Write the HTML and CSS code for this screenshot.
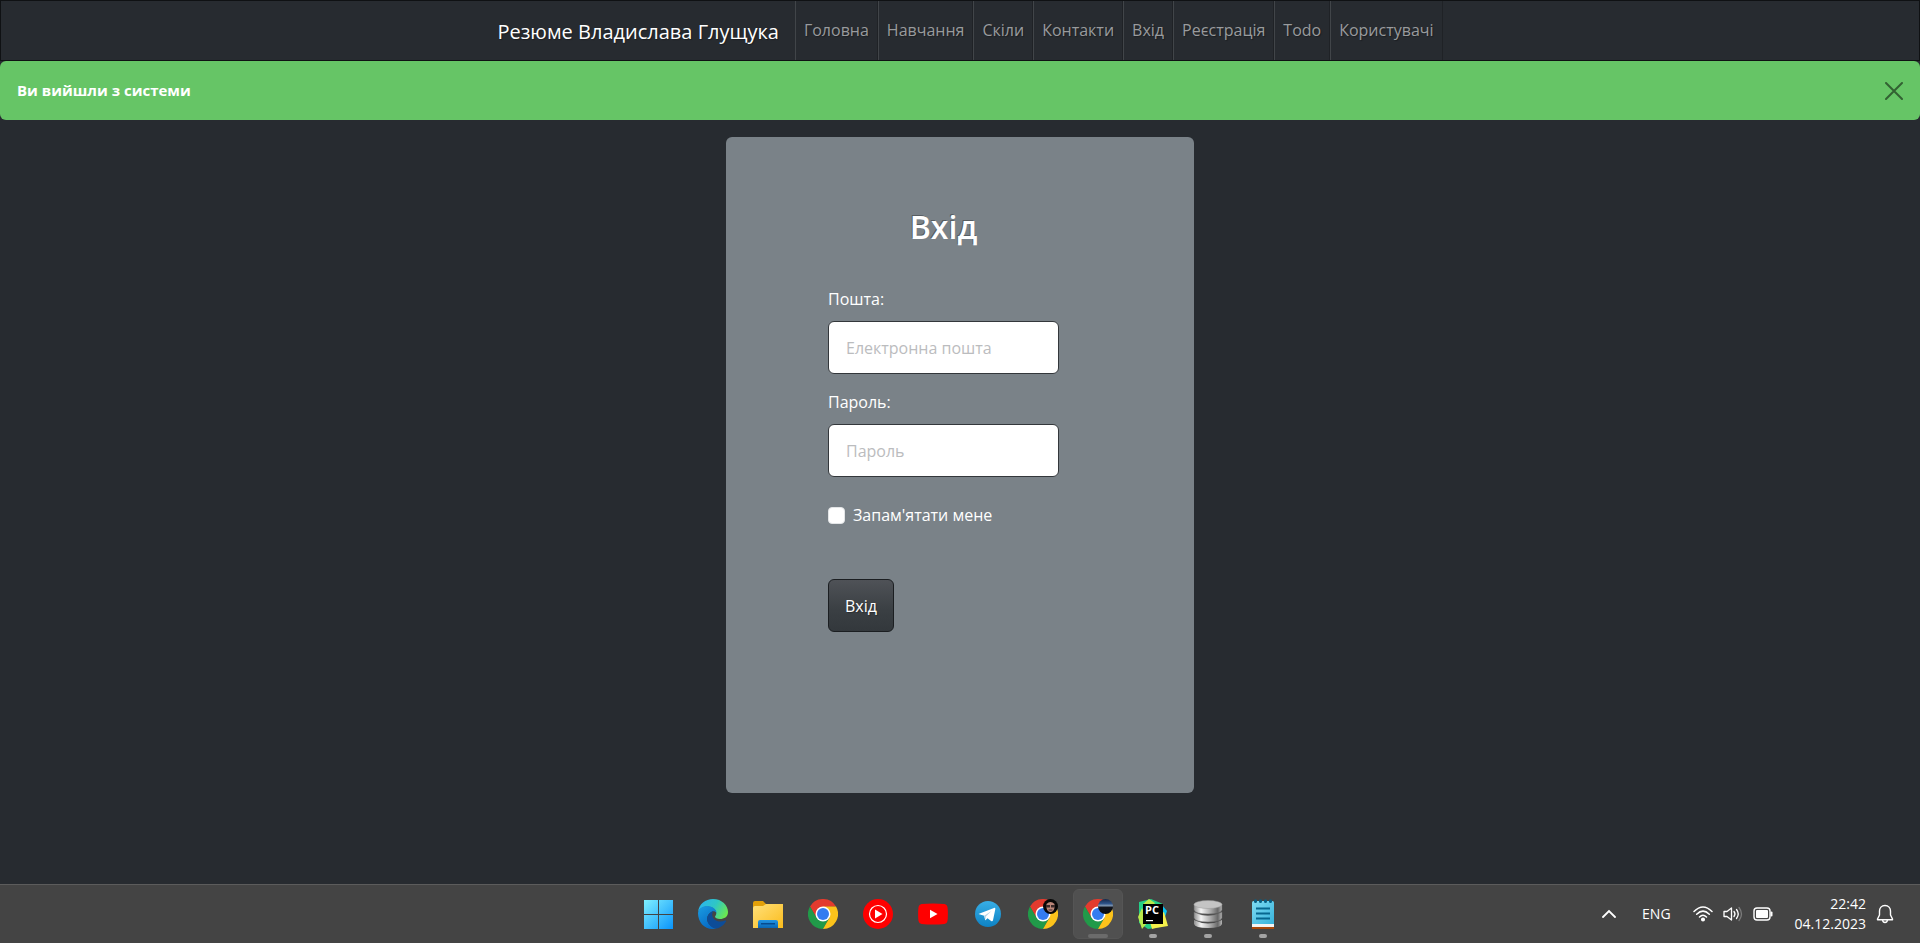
FILE: index.html
```html
<!DOCTYPE html>
<html lang="uk">
<head>
<meta charset="utf-8">
<title>Вхід</title>
<meta name="viewport" content="width=device-width, initial-scale=1">
<link rel="stylesheet" href="styles.css">
</head>
<body>
<svg class="defs" aria-hidden="true">
  <defs>
    <linearGradient id="win" x1="0" y1="0" x2="1" y2="1"><stop offset="0" stop-color="#7ff0ff"/><stop offset="1" stop-color="#0a94fb"/></linearGradient>
    <linearGradient id="edgeTop" x1="0" y1="0.3" x2="1" y2="0.7"><stop offset="0" stop-color="#2bb4ee"/><stop offset="0.5" stop-color="#2fc7c4"/><stop offset="1" stop-color="#6eea4a"/></linearGradient>
    <linearGradient id="edgeSide" x1="0" y1="0" x2="0.6" y2="1"><stop offset="0" stop-color="#1b9de2"/><stop offset="1" stop-color="#0669c4"/></linearGradient>
    <linearGradient id="folder" x1="0" y1="0" x2="1" y2="1"><stop offset="0" stop-color="#ffe07a"/><stop offset="1" stop-color="#fbbc1c"/></linearGradient>
    <linearGradient id="tray" x1="0" y1="0" x2="0" y2="1"><stop offset="0" stop-color="#2295e4"/><stop offset="1" stop-color="#0b66b4"/></linearGradient>
    <linearGradient id="tg" x1="0" y1="0" x2="0" y2="1"><stop offset="0" stop-color="#38aee6"/><stop offset="1" stop-color="#0d82c4"/></linearGradient>
    <linearGradient id="steel" x1="0" y1="0" x2="1" y2="0"><stop offset="0" stop-color="#8f8f8f"/><stop offset="0.25" stop-color="#f4f4f4"/><stop offset="0.6" stop-color="#a8a8a8"/><stop offset="0.85" stop-color="#686868"/><stop offset="1" stop-color="#b5b5b5"/></linearGradient>
    <linearGradient id="note" x1="0" y1="0" x2="1" y2="1"><stop offset="0" stop-color="#7fdcf3"/><stop offset="1" stop-color="#37b3dc"/></linearGradient>
    <linearGradient id="view" x1="0" y1="0" x2="0" y2="1"><stop offset="0" stop-color="#16284a"/><stop offset="0.3" stop-color="#2d5288"/><stop offset="0.46" stop-color="#8299b4"/><stop offset="0.54" stop-color="#12151e"/><stop offset="1" stop-color="#080b12"/></linearGradient>
    <symbol id="chrome" viewBox="0 0 30 30">
      <path fill="#e33b2e" d="M2 7.500A15 15 0 0 1 28 7.500L15 8 8.500 18.800z"/>
      <path fill="#219a49" d="M2 7.500L8.500 18.700 15 22.500 21.500 18.700 15 30A15 15 0 0 1 2 7.500z"/>
      <path fill="#fcc31b" d="M28 7.500A15 15 0 0 1 15 30L21.500 18.700 21 11 15 7.500z"/>
      <circle cx="15" cy="15" r="7.500" fill="#fff"/><circle cx="15" cy="15" r="6" fill="#347cf0"/>
    </symbol>
  </defs>
</svg>

<nav class="navbar">
  <a class="brand" href="#">Резюме Владислава Глущука</a>
  <ul class="menu">
    <li><a href="#">Головна</a></li>
    <li><a href="#">Навчання</a></li>
    <li><a href="#">Скіли</a></li>
    <li><a href="#">Контакти</a></li>
    <li><a href="#">Вхід</a></li>
    <li><a href="#">Реєстрація</a></li>
    <li><a href="#">Todo</a></li>
    <li><a href="#">Користувачі</a></li>
  </ul>
</nav>

<div class="alert" role="alert">
  <strong>Ви вийшли з системи</strong>
  <button class="close" type="button" aria-label="Закрити">
    <svg width="18" height="18" viewBox="0 0 18 18"><path d="M1 1l16 16M17 1L1 17" fill="none" stroke="#000" stroke-width="2" stroke-linecap="round"/></svg>
  </button>
</div>

<main class="page">
  <form class="card">
    <h1>Вхід</h1>
    <label for="email">Пошта:</label>
    <input class="field" id="email" type="email" placeholder="Електронна пошта">
    <label for="password">Пароль:</label>
    <input class="field" id="password" type="password" placeholder="Пароль">
    <div class="check">
      <input id="remember" type="checkbox">
      <label for="remember">Запам'ятати мене</label>
    </div>
    <button class="submit" type="button">Вхід</button>
  </form>
</main>

<footer class="taskbar">
  <div class="apps">
    <button class="app" type="button" aria-label="Start"><svg viewBox="0 0 30 30"><path fill="url(#win)" d="M1 1h14v14H1zM16 1h14v14H16zM1 16h14v14H1zM16 16h14v14H16z"/></svg></button>
    <button class="app" type="button" aria-label="Edge"><svg viewBox="0 0 30 30">
      <path fill="url(#edgeTop)" d="M0 13C1 5 7.500 0 15 0c9 0 15 6.500 15 13 0 5-4 7-8 7-3 0-5-1-5-2.200 0-.8 1.300-1.400 1.300-3.500C18.300 10 13 7 8.500 7.500 4 8 1 10.500 0 13z"/>
      <path fill="url(#edgeSide)" d="M0 14c.5-4 4-7 9-7 5 0 9.500 3 9.500 7-1-1.700-3-2.200-4.700-1.300C9 15 7.500 20.500 11 25c2 2.700 4.700 4 7.500 4.500C8 32 0 24.500 0 14z"/>
      <path fill="#0d4c97" d="M14 12.500c-5 3-6.500 8-3 12.700 3.500 4.500 8 5 10.500 3.300 3-1.500 5-3.500 6.500-6 .5-.9-.2-1.300-1-.9-6 2.800-12.500-.6-12.800-5.600 0-1.500.4-2.700 1.300-3.700z"/>
    </svg></button>
    <button class="app" type="button" aria-label="Explorer"><svg viewBox="0 0 30 30">
      <path fill="#e3a008" d="M0 4q0-2 2-2h8l3 3h15q2 0 2 2v5H0z"/>
      <path fill="url(#folder)" d="M0 9q0-2 2-2h8l3-2h17v24H0z"/>
      <path fill="url(#tray)" d="M5 29v-6q0-2 2-2h16q2 0 2 2v6z"/><path fill="#064b8f" d="M8 24h14v1.500H8z"/>
    </svg></button>
    <button class="app" type="button" aria-label="Chrome"><svg viewBox="0 0 30 30"><use href="#chrome"/></svg></button>
    <button class="app" type="button" aria-label="YouTube Music"><svg viewBox="0 0 30 30"><circle cx="15" cy="15" r="15" fill="#f00"/><circle cx="15" cy="15" r="8.500" fill="none" stroke="#fff" stroke-width="1.200"/><path fill="#fff" d="M12 10.500v9l7.500-4.500z"/></svg></button>
    <button class="app" type="button" aria-label="YouTube"><svg viewBox="0 0 30 30"><path fill="#f00" d="M3.500 5Q15 4 26.500 5 29 5.300 29.500 8q.8 7 0 14-.5 2.700-3 3-11.500 1-23 0Q1 24.700.5 22q-.8-7 0-14Q1 5.300 3.500 5z"/><path fill="#fff" d="M12 10.700v8.600l7.500-4.300z"/></svg></button>
    <button class="app" type="button" aria-label="Telegram"><svg viewBox="0 0 30 30"><circle cx="15" cy="15" r="13" fill="url(#tg)"/><path fill="#fff" d="M6 14.700L21 8.900q1.500-.4 1.300 1.300L20 21.300q-.5 1.500-1.900.6l-3.600-2.700-1.800 1.800q-.6.600-.7-.4l-.8-3.900-5-1.500q-1.200-.3-.2-.5z"/><path fill="#b7d4e5" d="M11.200 16.700l7.300-4.700-5.700 5.500-.3 3.500z"/></svg></button>
    <button class="app" type="button" aria-label="Chrome, profile 1"><svg viewBox="0 0 30 30"><use href="#chrome"/><circle cx="22.500" cy="7.500" r="7.500" fill="#070707"/><path fill="#b98578" d="M18.500 5q4-4 8 0v4q-1 4-4 4t-4-4z"/><path fill="#3a2a2a" d="M18 6h4v2.500h-4zM23 6h4v2.500h-4zM20.500 10.500h4v1h-4z"/></svg></button>
    <button class="app active" type="button" aria-label="Chrome, profile 2"><svg viewBox="0 0 30 30"><use href="#chrome"/><circle cx="22.500" cy="7.500" r="7.500" fill="url(#view)"/></svg></button>
    <button class="app open" type="button" aria-label="PyCharm"><svg viewBox="0 0 30 30">
      <path fill="#24cf87" d="M1 3L13 0l12 5-3 23-12 2-9-6z"/><path fill="#b9e94b" d="M0 18l4-9 6 14-6 7zM5 5l6-5 6 4-5 6z"/><path fill="#08c3f2" d="M24 6l5 6-3 9-4-3z"/><path fill="#f4f04b" d="M12 23l14-10 4 14-12 2-4 1z"/>
      <path fill="#000" d="M5 5h20v20H5z"/><path fill="#fff" d="M8 21h7v1.200H8z"/><text class="pc" x="7" y="15">PC</text>
    </svg></button>
    <button class="app open" type="button" aria-label="Database"><svg viewBox="0 0 30 30">
      <path fill="url(#steel)" d="M1 21q14 7 28 0v4q-1 4-14 4T1 25z"/>
      <path fill="url(#steel)" stroke="#666" stroke-width=".5" d="M1 13q14 7 28 0v6q-1 4-14 4T1 19z"/>
      <path fill="url(#steel)" stroke="#666" stroke-width=".5" d="M1 5h28v6q-1 4-14 4T1 11z"/>
      <ellipse cx="15" cy="5.500" rx="14" ry="4" fill="#c4c4c4" stroke="#999" stroke-width=".5"/>
    </svg></button>
    <button class="app open" type="button" aria-label="Notepad"><svg viewBox="0 0 30 30">
      <path fill="#a8480a" d="M4 26h22v4H4z"/><path fill="#f4f4f4" d="M4 25h22v3H4z"/><path fill="url(#note)" d="M4 3.500Q4 2 5.500 2h19Q26 2 26 3.500V25H4z"/>
      <path stroke="#07678f" stroke-width="1.800" d="M8 9.500h14M8 14.500h14M8 19.500h14"/><path stroke="#075f85" stroke-width="3" stroke-linecap="round" d="M7.500 1.700v.8M12.500 1.700v.8M17.500 1.700v.8M22.500 1.700v.8"/>
    </svg></button>
  </div>
  <div class="tray">
    <svg class="up" width="14" height="10" viewBox="0 0 14 10"><path d="M1 8l6-6 6 6" fill="none" stroke="#fff" stroke-width="1.800" stroke-linecap="round"/></svg>
    <span class="lang">ENG</span>
    <svg class="wifi" width="20" height="20" viewBox="0 0 20 20" fill="none" stroke="#fff" stroke-width="1.500" stroke-linecap="round"><path d="M1 7.500q9-9 18 0M3.700 10.300q6.300-6.300 12.600 0M6.500 13q3.500-3.500 7 0"/><circle cx="10" cy="15.500" r="1.300" fill="#fff"/></svg>
    <svg class="sound" width="20" height="20" viewBox="0 0 20 20" fill="none" stroke="#fff" stroke-width="1.300" stroke-linecap="round" stroke-linejoin="round"><path d="M1 7.500h3L8.500 4v12L4 12.500H1zM11 7.500q2 2.500 0 5M13.500 5.500q3.500 4.500 0 9"/><path stroke="#7b7b7b" d="M16 3.500q5 6.500 0 13"/></svg>
    <svg class="battery" width="20" height="20" viewBox="0 0 20 20"><rect x="1" y="4" width="16" height="12" rx="3" fill="none" stroke="#fff" stroke-width="1.400"/><rect x="3" y="6" width="12" height="8" rx="1" fill="#fff"/><path d="M18.500 8.500v3" stroke="#fff" stroke-width="2" stroke-linecap="round"/></svg>
    <time class="clock" datetime="2023-12-04T22:42"><span>22:42</span><span>04.12.2023</span></time>
    <svg class="bell" width="18" height="20" viewBox="0 0 18 20" fill="none" stroke="#fff" stroke-width="1.400" stroke-linejoin="round"><path d="M9 1.500c-3.500 0-5.500 2.500-5.500 5.500v4L1.500 15v.8h15V15l-2-4V7c0-3-2-5.500-5.500-5.500z"/><path d="M6.500 16q.5 2.500 2.500 2.500t2.500-2.500"/></svg>
  </div>
</footer>
</body>
</html>
```
FILE: styles.css
```css
*, *::before, *::after { box-sizing: border-box; }

body {
  margin: 0;
  min-height: 100vh;
  display: flex;
  flex-direction: column;
  background: #272b30;
  color: #fff;
  font-family: "Segoe UI", "Open Sans", sans-serif;
  font-size: 16px;
  line-height: 24px;
}

button, input { font: inherit; }

.defs { position: absolute; width: 0; height: 0; }

/* Top navigation */
.navbar {
  display: flex;
  justify-content: center;
  padding-left: 20px;
  border: 1px solid #0f1113;
  text-shadow: 1px 1px 1px rgba(0, 0, 0, 0.3);
}

.brand {
  margin-right: 16px;
  padding: 16px 0 13px;
  color: #fff;
  font-size: 20px;
  line-height: 30px;
  text-decoration: none;
}

.menu {
  display: flex;
  margin: 0;
  padding: 0;
  list-style: none;
}

.menu a {
  display: block;
  height: 100%;
  padding: 17px 8px 18px;
  border-left: 1px solid rgba(255, 255, 255, 0.12);
  border-right: 1px solid rgba(0, 0, 0, 0.2);
  color: #999b9d;
  text-decoration: none;
}

/* Flash message */
.alert {
  display: flex;
  align-items: center;
  justify-content: space-between;
  padding: 17px;
  border-radius: 6px;
  background: #66c566;
  font-size: 15px;
  line-height: 25px;
}

.close {
  display: flex;
  padding: 0;
  border: 0;
  background: none;
  opacity: 0.5;
}

/* Login card */
.page {
  flex: 1;
  padding: 17px 16px;
}

.card {
  display: flex;
  flex-direction: column;
  max-width: 468px;
  min-height: 656px;
  margin: 0 auto;
  padding: 70px 135px 70px 102px;
  border-radius: 6px;
  background: #7a8288;
}

.card h1 {
  margin: 0 0 40px;
  font-size: 32px;
  font-weight: 600;
  line-height: 40px;
  text-align: center;
  text-shadow: -1px -1px 0 rgba(0, 0, 0, 0.3);
}

.card > label { margin-bottom: 10px; }

.field {
  width: 100%;
  height: 53px;
  margin-bottom: 16px;
  padding: 0 17px;
  border: 1px solid #33373b;
  border-radius: 6px;
  background: #fff;
  color: #272b30;
}

.field::placeholder { color: #bbbcbe; opacity: 1; }

.check {
  display: flex;
  align-items: center;
  gap: 8px;
  margin: 10px 0 52px;
}

.check input {
  appearance: none;
  width: 17px;
  height: 17px;
  margin: 0;
  border: 1px solid #e3e5e7;
  border-radius: 4px;
  background: #fff;
}

.submit {
  align-self: flex-start;
  height: 53px;
  padding: 0 16px;
  border: 1px solid #1b1e21;
  border-radius: 6px;
  background: linear-gradient(#4f5257, #3a3f43 60%, #33383c);
  color: #fff;
  text-shadow: 1px 1px 1px rgba(0, 0, 0, 0.3);
}

/* Taskbar */
.taskbar {
  display: grid;
  grid-template-columns: 1fr auto 1fr;
  align-items: center;
  height: 59px;
  border-top: 1px solid #5c5c5c;
  background: #444;
}

.apps {
  grid-column: 2;
  display: flex;
  gap: 5px;
}

.app {
  position: relative;
  display: flex;
  align-items: center;
  justify-content: center;
  width: 50px;
  height: 50px;
  padding: 0;
  border: 1px solid transparent;
  border-radius: 6px;
  background: none;
}

.app svg { width: 30px; height: 30px; }

.app.active { border-color: #555; background: #505050; }

.app.open::after,
.app.active::after {
  content: "";
  position: absolute;
  bottom: 0;
  left: 50%;
  width: 8px;
  height: 4px;
  border-radius: 2px;
  background: #a3a3a3;
  transform: translateX(-50%);
}

.app.active::after { width: 20px; background: #6b6b6b; }

.pc {
  fill: #fff;
  font-family: "Open Sans", sans-serif;
  font-size: 11px;
  font-weight: 700;
}

.tray {
  display: flex;
  align-items: center;
  justify-content: flex-end;
  padding-right: 26px;
  font-size: 14px;
}

.lang { margin: 0 22px 0 26px; }

.sound, .battery { margin-left: 10px; }

.clock {
  display: flex;
  flex-direction: column;
  align-items: flex-end;
  margin: 0 10px 0 22px;
  line-height: 20px;
}
```
